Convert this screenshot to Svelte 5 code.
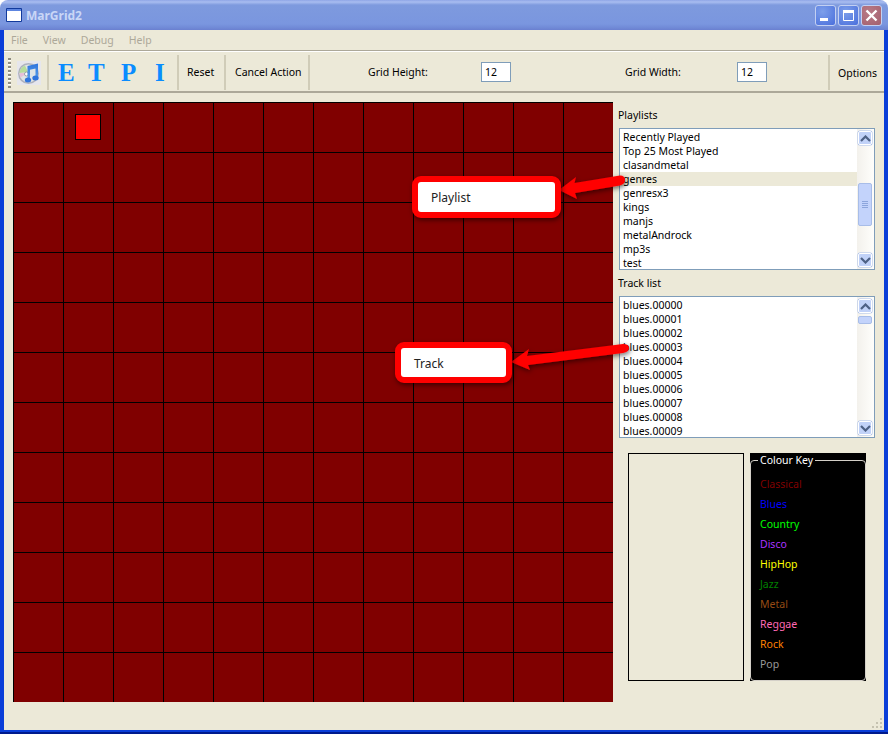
<script>
  const cells = Array.from({ length: 144 }, (_, i) => i);
  const playlists = ['Recently Played','Top 25 Most Played','clasandmetal','genres','genresx3','kings','manjs','metalAndrock','mp3s','test'];
  const tracks = Array.from({ length: 10 }, (_, i) => `blues.0000${i}`);
  const key = [['Classical','#800000'],['Blues','#0000ff'],['Country','#00ff00'],['Disco','#aa33ff'],['HipHop','#ffff00'],['Jazz','#008000'],['Metal','#964b14'],['Reggae','#ff69b4'],['Rock','#ff8000'],['Pop','#999999']];
</script>

{#snippet scrollbar(thumbClass)}
  <div class="sb">
    <div class="sbtn"><svg width="11" height="7" viewBox="0 0 11 7"><path d="M1 6 L5.5 1.500 L10 6" fill="none" stroke="#4d6185" stroke-width="2.200"/></svg></div>
    <div class="track"><div class={thumbClass}>{#if thumbClass === 'thumb big'}<i></i><i></i><i></i><i></i>{/if}</div></div>
    <div class="sbtn"><svg width="11" height="7" viewBox="0 0 11 7"><path d="M1 1 L5.5 5.500 L10 1" fill="none" stroke="#4d6185" stroke-width="2.200"/></svg></div>
  </div>
{/snippet}

<div class="window">
  <header class="title">
    <svg class="appicon" width="16" height="14" viewBox="0 0 16 14"><rect width="16" height="14" rx="1" fill="#123a9c"/><rect x="1" y="3" width="14" height="10" fill="#fff"/><rect x="1" y="1" width="14" height="2" fill="#5d85e0"/></svg>
    <span class="name">MarGrid2</span>
    <div class="caps">
      <div class="cap"><svg width="19" height="19" viewBox="0 0 19 19"><rect x="4" y="12" width="8" height="3" fill="#fff"/></svg></div>
      <div class="cap"><svg width="19" height="19" viewBox="0 0 19 19"><path d="M4.500 4.500h10v10h-10z" fill="none" stroke="#fff"/><rect x="4" y="4" width="11" height="3" fill="#fff"/></svg></div>
      <div class="cap close"><svg width="19" height="19" viewBox="0 0 19 19"><path d="M4.500 4.500 L14.500 14.500 M14.500 4.500 L4.500 14.500" stroke="#fff" stroke-width="2.400"/></svg></div>
    </div>
  </header>

  <div class="frame">
    <nav class="menu"><span>File</span><span>View</span><span>Debug</span><span>Help</span></nav>

    <div class="toolbar">
      <div class="grip"></div>
      <div class="sec first">
        <svg width="24" height="24" viewBox="0 0 24 24">
          <defs><linearGradient id="note" x1="0" y1="0" x2="0" y2="1"><stop offset="0" stop-color="#2f74dc"/><stop offset="1" stop-color="#5ba2ea"/></linearGradient></defs>
          <rect width="24" height="24" fill="#e6e6ec"/>
          <circle cx="11.500" cy="12.500" r="10.500" fill="#aeb2be"/>
          <circle cx="11.500" cy="12.500" r="9" fill="#dfe4e6"/>
          <path d="M2.500 12 A9 9 0 0 1 8 4.500 L11 11z" fill="#b7dd9d"/>
          <path d="M3.500 16.500 A9 9 0 0 1 2.500 12 L11 12z" fill="#e7c0d8"/>
          <circle cx="9.500" cy="13" r="2" fill="#fff" stroke="#9a9ea8"/>
          <path d="M10.500 5 L21 2.500 V17 H18.500 V7.500 L13 8.800 V19 H10.500z" fill="url(#note)"/>
          <ellipse cx="11" cy="19" rx="3.200" ry="2.500" fill="#2f74dc"/>
          <ellipse cx="18.500" cy="17" rx="3.200" ry="2.500" fill="#2f74dc"/>
        </svg>
      </div>
      <div class="sec letters"><b>E</b><b>T</b><b>P</b><b>I</b></div>
      <div class="sec reset"><span class="t">Reset</span></div>
      <div class="sec cancel"><span class="t">Cancel Action</span></div>
      <div class="sec fields">
        <label class="t gh" for="gh">Grid Height:</label>
        <input id="gh" value="12" />
        <label class="t gw" for="gw">Grid Width:</label>
        <input id="gw" value="12" />
      </div>
      <div class="opt"><span class="t">Options</span></div>
    </div>

    <main class="content">
      <div class="grid">
        {#each cells as c}
          <div class="cell">{#if c === 1}<div class="marker"></div>{/if}</div>
        {/each}
      </div>

      <aside class="side">
        <div class="lbl">Playlists</div>
        <div class="list">
          <ul>
            {#each playlists as p}<li class:sel={p === 'genres'}>{p}</li>{/each}
          </ul>
          {@render scrollbar('thumb big')}
        </div>
        <div class="lbl second">Track list</div>
        <div class="list">
          <ul>
            {#each tracks as t}<li>{t}</li>{/each}
          </ul>
          {@render scrollbar('thumb small')}
        </div>
        <div class="bottom">
          <div class="preview"></div>
          <div class="keybox">
            <fieldset>
              <legend>Colour Key</legend>
              {#each key as [n, c]}<div class="k" style="color:{c}">{n}</div>{/each}
            </fieldset>
          </div>
        </div>
      </aside>
    </main>

    <div class="foot">
      <svg width="12" height="12" viewBox="0 0 12 12" fill="#c5c2b0"><rect x="9" y="1" width="2" height="2"/><rect x="5" y="5" width="2" height="2"/><rect x="9" y="5" width="2" height="2"/><rect x="1" y="9" width="2" height="2"/><rect x="5" y="9" width="2" height="2"/><rect x="9" y="9" width="2" height="2"/></svg>
    </div>
  </div>

  <svg class="arrows" width="888" height="734" viewBox="0 0 888 734">
    <defs><filter id="s" x="-20%" y="-50%" width="140%" height="200%"><feDropShadow dx="1" dy="2" stdDeviation="2.500" flood-color="#000" flood-opacity=".55"/></filter></defs>
    <g filter="url(#s)" fill="#ff0000">
      <path d="M559 190 L576 177 L574.500 183 L620 175.500 Q625 175.500 625 180 Q625 184 620 185.500 L575 193 L577 199 Z"/>
      <path d="M511 362 L529 349 L527 356 L623 344 Q629 344 629 348 Q629 352 623 353 L528 365 L530 370 Z"/>
    </g>
  </svg>
  <div class="callout pl">Playlist</div>
  <div class="callout tr">Track</div>
</div>

<style>
  :global(body) { margin: 0; background: #fff; }
  .window { position: relative; width: 888px; height: 734px; display: flex; flex-direction: column; font-family: "Noto Sans", sans-serif; font-size: 10.5px; color: #000; overflow: hidden; background: linear-gradient(#fff 0 30px, #001a8c 30px); }
  .title { height: 30px; flex: none; box-sizing: border-box; display: flex; align-items: center; padding: 0 6px; border-radius: 8px 8px 0 0; background: linear-gradient(#8fa6e6 0, #a9bdf0 2px, #7e9ade 5px, #7a96df 24px, #7089d6 28px, #6a80d0 30px); }
  .appicon { margin-right: 4px; }
  .name { font: bold 12px "Noto Sans", sans-serif; color: #c9d6f6; }
  .caps { margin-left: auto; display: flex; gap: 2px; }
  .cap { width: 21px; height: 21px; box-sizing: border-box; border: 1px solid #c3d0f2; border-radius: 3px; background: radial-gradient(circle at 35% 30%, #7d9fea, #4a6fdc); display: flex; align-items: center; justify-content: center; }
  .close { background: radial-gradient(circle at 35% 30%, #b87a86, #a4606e); }
  .frame { flex: 1; min-height: 0; display: flex; flex-direction: column; background: #ece9d8; border: 4px solid #0a3ed8; border-top: 0; border-bottom-width: 2px; margin-bottom: 2px; }
  .menu { height: 20px; flex: none; display: flex; align-items: center; gap: 15px; padding-left: 7px; color: #aca899; box-sizing: border-box; }
  .toolbar { height: 43px; flex: none; box-sizing: border-box; border-top: 1px solid #aca899; border-bottom: 2px solid #aca899; box-shadow: inset 0 1px 0 #fff; display: flex; align-items: center; padding: 4px 0 1px 4px; }
  .grip { width: 3px; height: 30px; margin-right: 6px; background: repeating-linear-gradient(#8f8d80 0 2px, #fff 2px 3px, transparent 3px 4px); }
  .sec { height: 35px; display: flex; align-items: center; border-right: 2px solid #d0ccb8; box-sizing: border-box; flex: none; }
  .t { margin-bottom: 2px; }
  .first { width: 32px; }
  .letters { width: 130px; padding-left: 9px; color: #0a8cff; font: bold 25px "Liberation Serif", serif; }
  .letters b { width: 30px; flex: none; }
  .letters b:nth-child(2) { width: 33px; }
  .letters b:nth-child(3) { width: 34px; }
  .reset { width: 47px; padding-left: 8px; }
  .cancel { width: 84px; padding-left: 9px; }
  .fields { width: 520px; }
  .fields label { margin-left: 58px; width: 113px; flex: none; }
  .fields .gw { margin-left: 114px; width: 112px; }
  input { width: 30px; height: 20px; margin-bottom: 1px; box-sizing: border-box; border: 1px solid #7f9db9; background: #fff; padding: 0 0 0 3px; font: inherit; color: #000; outline: none; border-radius: 0; flex: none; }
  .opt { padding-left: 8px; }
  .content { flex: 1; min-height: 0; display: flex; padding: 9px 0 0 9px; gap: 5px; }
  .grid { width: 600px; height: 600px; flex: none; display: grid; grid-template-columns: repeat(12, 50px); grid-template-rows: repeat(12, 50px); background: #800000; }
  .cell { box-sizing: border-box; border-left: 1px solid #000; border-top: 1px solid #000; padding: 11px 0 0 11px; }
  .marker { width: 26px; height: 26px; box-sizing: border-box; background: #f00; border: 1px solid #000; }
  .side { width: 257px; flex: none; display: flex; flex-direction: column; }
  .lbl { height: 14px; line-height: 14px; margin: 6px 0; }
  .list { margin-left: 1px; width: 256px; height: 142px; box-sizing: border-box; border: 1px solid #7f9db9; background: #fff; display: flex; }
  ul { list-style: none; margin: 0; padding: 1px 0 0; flex: 1; min-width: 0; }
  li { height: 14px; line-height: 14px; padding-left: 3px; }
  li.sel { background: #ece9d8; }
  .sb { width: 17px; flex: none; display: flex; flex-direction: column; padding: 2px 2px 2px 1px; box-sizing: border-box; background: linear-gradient(90deg, #f3f1ec, #fefefb); }
  .sbtn { height: 14px; flex: none; box-sizing: border-box; border: 1px solid #fff; border-radius: 2px; background: #c1d2f8; display: flex; align-items: center; justify-content: center; box-shadow: 0 0 0 0.5px #a8bde8; }
  .track { flex: 1; position: relative; }
  .thumb { position: absolute; left: 0; right: 0; box-sizing: border-box; border: 1px solid #a8bde8; border-radius: 2px; background: #c3d3fb; display: flex; flex-direction: column; align-items: center; justify-content: center; gap: 1px; }
  .thumb i { display: block; width: 6px; height: 1px; background: #8ca5dc; }
  .big { top: 38px; height: 43px; }
  .small { top: 3px; height: 8px; }
  .bottom { display: flex; gap: 6px; margin: 15px 0 0 10px; }
  .preview { width: 116px; height: 228px; box-sizing: border-box; border: 1px solid #000; }
  .keybox { width: 116px; height: 228px; background: #000; box-sizing: border-box; padding-top: 1px; }
  fieldset { margin: 0; box-sizing: border-box; height: 227px; border: 1px solid #d4d0c8; border-radius: 4px; padding: 8px 0 0 9px; color: #fff; }
  legend { padding: 0 2px; margin-left: -2px; line-height: 12px; color: #fff; }
  .k { height: 20px; line-height: 20px; }
  .foot { flex: 1; display: flex; justify-content: flex-end; align-items: flex-end; padding: 0 1px 1px 0; }
  .arrows { position: absolute; left: 0; top: 0; pointer-events: none; }
  .callout { position: absolute; box-sizing: border-box; background: #fff; border: 6px solid #f00; border-radius: 9px; font-size: 12px; display: flex; align-items: center; color: #222; box-shadow: 1px 2px 5px rgba(0,0,0,.55); }
  .pl { left: 412px; top: 176px; width: 149px; height: 42px; padding-left: 13px; }
  .tr { left: 395px; top: 342px; width: 117px; height: 41px; padding: 2px 0 0 13px; }
</style>
